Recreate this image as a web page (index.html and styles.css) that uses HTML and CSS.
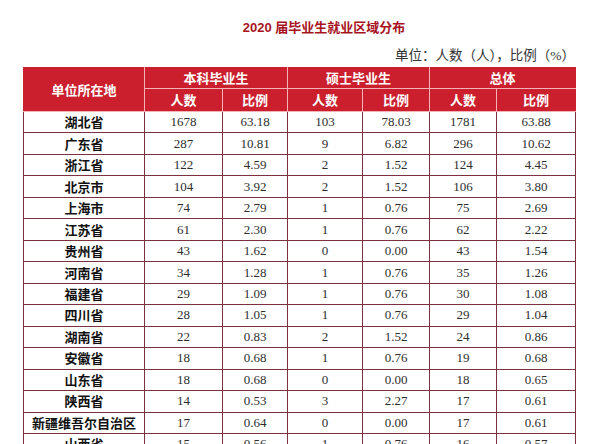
FILE: index.html
```html
<!DOCTYPE html>
<html lang="zh-CN">
<head>
<meta charset="utf-8">
<title>2020届毕业生就业区域分布</title>
<link rel="stylesheet" href="styles.css">
</head>
<body>
<div class="page">
  <h1 class="title">2020 届毕业生就业区域分布</h1>
  <p class="unit">单位：人数（人），比例（%）</p>
  <table class="dist">
    <colgroup>
      <col class="c-name">
      <col class="c-a">
      <col class="c-b">
      <col class="c-c">
      <col class="c-d">
      <col class="c-e">
      <col class="c-f">
    </colgroup>
    <thead>
      <tr class="h1">
        <th rowspan="2">单位所在地</th>
        <th colspan="2">本科毕业生</th>
        <th colspan="2">硕士毕业生</th>
        <th colspan="2">总体</th>
      </tr>
      <tr class="h2">
        <th>人数</th><th>比例</th>
        <th>人数</th><th>比例</th>
        <th>人数</th><th>比例</th>
      </tr>
    </thead>
    <tbody>
      <tr><th>湖北省</th><td>1678</td><td>63.18</td><td>103</td><td>78.03</td><td>1781</td><td>63.88</td></tr>
      <tr><th>广东省</th><td>287</td><td>10.81</td><td>9</td><td>6.82</td><td>296</td><td>10.62</td></tr>
      <tr><th>浙江省</th><td>122</td><td>4.59</td><td>2</td><td>1.52</td><td>124</td><td>4.45</td></tr>
      <tr><th>北京市</th><td>104</td><td>3.92</td><td>2</td><td>1.52</td><td>106</td><td>3.80</td></tr>
      <tr><th>上海市</th><td>74</td><td>2.79</td><td>1</td><td>0.76</td><td>75</td><td>2.69</td></tr>
      <tr><th>江苏省</th><td>61</td><td>2.30</td><td>1</td><td>0.76</td><td>62</td><td>2.22</td></tr>
      <tr><th>贵州省</th><td>43</td><td>1.62</td><td>0</td><td>0.00</td><td>43</td><td>1.54</td></tr>
      <tr><th>河南省</th><td>34</td><td>1.28</td><td>1</td><td>0.76</td><td>35</td><td>1.26</td></tr>
      <tr><th>福建省</th><td>29</td><td>1.09</td><td>1</td><td>0.76</td><td>30</td><td>1.08</td></tr>
      <tr><th>四川省</th><td>28</td><td>1.05</td><td>1</td><td>0.76</td><td>29</td><td>1.04</td></tr>
      <tr><th>湖南省</th><td>22</td><td>0.83</td><td>2</td><td>1.52</td><td>24</td><td>0.86</td></tr>
      <tr><th>安徽省</th><td>18</td><td>0.68</td><td>1</td><td>0.76</td><td>19</td><td>0.68</td></tr>
      <tr><th>山东省</th><td>18</td><td>0.68</td><td>0</td><td>0.00</td><td>18</td><td>0.65</td></tr>
      <tr><th>陕西省</th><td>14</td><td>0.53</td><td>3</td><td>2.27</td><td>17</td><td>0.61</td></tr>
      <tr><th>新疆维吾尔自治区</th><td>17</td><td>0.64</td><td>0</td><td>0.00</td><td>17</td><td>0.61</td></tr>
      <tr><th>山西省</th><td>15</td><td>0.56</td><td>1</td><td>0.76</td><td>16</td><td>0.57</td></tr>
    </tbody>
  </table>
</div>
</body>
</html>
```
FILE: styles.css
```css
html, body {
  margin: 0;
  padding: 0;
  background: #ffffff;
}

.page {
  padding: 18px 22px 0 23px;
  font-family: "Liberation Serif", "Noto Sans CJK SC", serif;
  color: #222;
}

.title {
  margin: 0;
  padding-left: 50px;
  text-align: center;
  font-family: "Liberation Sans", "Noto Sans CJK SC", sans-serif;
  font-weight: bold;
  font-size: 13px;
  line-height: 20px;
  color: #a8141e;
}

.unit {
  margin: 9px 0 2px;
  padding-right: 0;
  text-align: right;
  font-family: "Liberation Serif", "Noto Sans CJK SC", serif;
  font-size: 13.5px;
  line-height: 18px;
  color: #333;
}

.dist {
  width: 552px;
  table-layout: fixed;
  border-collapse: collapse;
}

.c-name { width: 121px; }
.c-a { width: 78px; }
.c-b { width: 65px; }
.c-c { width: 75px; }
.c-d { width: 67px; }
.c-e { width: 67px; }
.c-f { width: 79px; }

.dist thead th {
  background: #cb1f2e;
  color: #fff;
  font-family: "Noto Sans CJK SC", sans-serif;
  font-weight: bold;
  font-size: 13px;
  line-height: 16px;
  padding: 0;
  border: 1px solid #f2b3b9;
  text-align: center;
  vertical-align: middle;
}

.dist thead tr:first-child th {
  border-top-color: #cb1f2e;
}

.dist thead th:first-child {
  border-left-color: #cb1f2e;
}

.dist thead tr.h1 th:last-child,
.dist thead tr.h2 th:last-child {
  border-right-color: #cb1f2e;
}

.dist tr.h1 { height: 21px; }
.dist tr.h2 { height: 23px; }

.dist tbody tr { height: 21.47px; }

.dist tbody th,
.dist tbody td {
  padding: 0;
  border: 1px solid #7d3040;
  text-align: center;
  vertical-align: middle;
  font-size: 13px;
  line-height: 16px;
}

.dist tbody th {
  font-family: "Noto Sans CJK SC", sans-serif;
  font-weight: bold;
  color: #111;
}

.dist tbody td {
  font-family: "Liberation Serif", serif;
  color: #2e2e2e;
}
```
